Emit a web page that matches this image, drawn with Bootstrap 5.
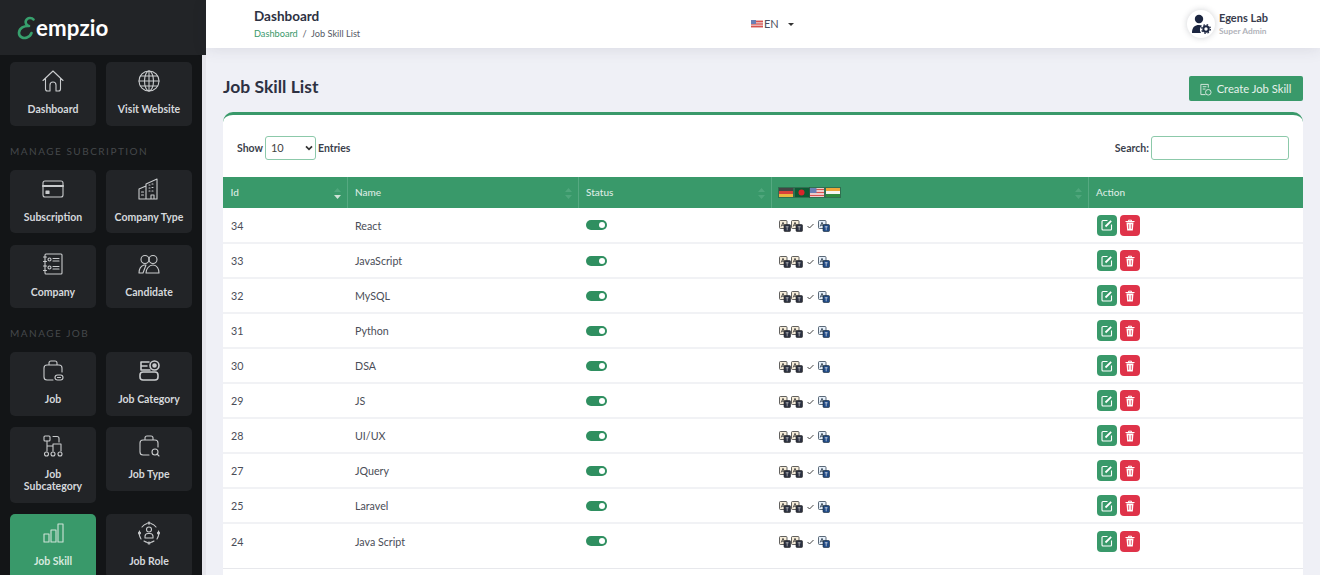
<!DOCTYPE html>
<html lang="en">
<head>
<meta charset="utf-8">
<title>Job Skill List</title>
<link href="https://cdn.jsdelivr.net/npm/bootstrap@5.3.0/dist/css/bootstrap.min.css" rel="stylesheet">
<style>
html,body{height:575px;overflow:hidden}
body{font-family:Lato,"Liberation Sans",sans-serif;background:#eff0f6;color:#2d3142}
.shell{height:575px}
.side{width:206px;height:575px;flex:none;background:#e6e6ec}
.logo-box{height:55px;background:#222427;padding-left:17px;color:#fff;font-size:22.300px;font-weight:700;letter-spacing:.1px}
.logo-e{width:19px;height:24px;flex:none;fill:none;stroke:#37a06d;stroke-width:2.600;stroke-linecap:round;stroke-linejoin:round}
.side-scroll{width:202px;flex:1;min-height:0;background:#131517;padding:7px 10px 0;overflow:hidden}
.tile-grid{display:grid;grid-template-columns:86px 86px;column-gap:10px;row-gap:11.400px;align-items:start}
.tile{background:#222427;border-radius:5px;padding:7px 3px 10.600px;color:#d5d8dc;font-size:10.500px;font-weight:700;line-height:12px;text-align:center;text-decoration:none;display:flex;flex-direction:column;align-items:center}
.tile svg{width:24px;height:24px;margin-bottom:10px;flex:none;fill:none;stroke:#c9cbcd;stroke-width:1.100;stroke-linecap:round;stroke-linejoin:round}
.tile.on{background:#39996a;color:#d8e9df;border-radius:5px 5px 0 0;min-height:70px}
.tile.on svg{stroke:#cfe3d7}
.side-head{font-size:10px;letter-spacing:1.500px;color:#45484b;line-height:12px;margin:19px 0 13px}
.top{height:48px;background:#fff;box-shadow:0 2px 14px rgba(45,49,66,.1);padding:0 17px 0 48px;position:relative}
.top-title{font-size:13.500px;font-weight:700;color:#2d3142;line-height:17px;margin-top:8px}
.crumbs{font-size:9.200px;line-height:12px;margin-top:3px;color:#555a66}
.crumbs a{color:#39996a;text-decoration:none}
.lang{font-size:11px;color:#4c5060;margin-left:347px;gap:1px}
.caret-mini{border-top:3.500px solid #333;border-left:3.500px solid transparent;border-right:3.500px solid transparent;margin-left:8px}
.avatar{width:28px;height:28px;border-radius:50%;background:#fff;box-shadow:0 0 6px rgba(45,49,66,.22)}
.u-name{font-size:11px;font-weight:700;line-height:13px;color:#383c4c}
.u-role{font-size:8.400px;font-weight:700;line-height:11px;color:#b1b3ba;margin-top:2px}
.body-wrap{padding:0 17px;flex:1;min-width:0}
.head-row{height:64px;padding-top:28px}
.page-h{font-size:17.500px;font-weight:700;color:#2d3142;margin:0;line-height:22px}
.btn-make{background:#39996a;color:#e5f1ea;font-size:11.200px;height:25px;width:114px;border-radius:2px;padding:1px 2px 0 0;border:0;gap:5px}
.btn-make svg{width:13px;height:13px;fill:none;stroke:#dcebe2;stroke-width:1}
.sheet{background:#fff;border-top:3px solid #39996a;border-radius:10px 10px 0 0;height:464px}
.ctl-row{padding:21px 14px 0 14px;height:62px;font-size:10.500px;font-weight:700;color:#3b3f4c}
.ctl-txt{padding-top:1px}
.ctl-sel{width:51px;height:24px;font-size:11px;padding:0 0 0 5px;margin:0 2px;border:1px solid #8cc9aa;border-radius:3px;color:#444;background-image:url("data:image/svg+xml,%3csvg xmlns='http://www.w3.org/2000/svg' viewBox='0 0 9 7'%3e%3cpath fill='none' stroke='%23333' stroke-width='2' d='M1 1.500l3.500 3.500 3.500-3.500'/%3e%3c/svg%3e");background-position:right 2px center;background-size:8px 6px;min-height:0}
.ctl-inp{width:138px;height:24px;margin-left:2px;border:1px solid #8cc9aa;border-radius:3px;min-height:0;padding:0}
.tbl{table-layout:fixed;margin:0;color:#4a4d57;width:1080px}
.tbl th{background:#39996a;color:#dcebe3;font-weight:500;height:31px;padding:0 7.500px;border-right:1px solid #55a981;border-bottom:0;position:relative;vertical-align:middle;font-size:10px}
.tbl th:last-child{border-right:0}
.tbl td{height:35px;padding:2px 8px 0;vertical-align:middle;border-bottom:2px solid #f1f2f5;color:#4a4d57;font-size:10.700px}
.tbl tr:last-child td{border-bottom:0}
.tbl td:last-child{padding-left:9px;padding-top:0}
.sort{position:absolute;right:6px;top:11px;display:block;width:7px;height:11px;fill:#4fa67c}
.tg{width:21px;height:10px;border-radius:5px;background:#2f8f60;position:relative;display:block;margin-top:-2px}
.tg::after{content:"";position:absolute;right:2px;top:2px;width:6px;height:6px;border-radius:50%;background:#fff}
.flag-row{display:flex;gap:1.500px;align-items:center}
.flg{width:14px;height:9px;display:block;flex:none;outline:.5px solid rgba(40,60,50,.45)}
.tr-row{display:flex;align-items:center}
.tr-ic{width:12px;height:12px;display:block;flex:none}
.act{width:20px;height:21px;border-radius:4px;display:inline-flex;align-items:center;justify-content:center;margin-right:3px;border:0;padding:0}
.act svg{width:12px;height:12px}
.act-e{background:#39996a}.act-d{background:#df3349}
.foot-line{border-top:1px solid #e7e8ec;margin-top:10px}
</style>
</head>
<body>
<svg width="0" height="0" class="d-none">
<defs>
<symbol id="tr" viewBox="0 0 12 12"><rect x="0.500" y="0.500" width="7.500" height="8" rx="1" fill="#f6ecd8" stroke="#3a3a3a" stroke-width=".8"/><rect x="5" y="4.500" width="6.500" height="7" rx="1" fill="#2b3040" stroke="#222" stroke-width=".6"/><path d="M2.200 6.500 4 2.300 5.800 6.500M2.900 5.200h2.200" fill="none" stroke="#333" stroke-width=".8"/><path d="M6.700 6.800h3M8.200 6.300v4" stroke="#ddd" stroke-width=".6"/></symbol>
<symbol id="tr2" viewBox="0 0 12 12"><rect x="0.500" y="0.500" width="7.500" height="8" rx="1" fill="#e7f0fa" stroke="#345" stroke-width=".8"/><rect x="5" y="4.500" width="6.500" height="7" rx="1" fill="#1f4a86" stroke="#123" stroke-width=".6"/><path d="M2.200 6.500 4 2.300 5.800 6.500M2.900 5.200h2.200" fill="none" stroke="#234" stroke-width=".8"/><path d="M6.700 6.800h3M8.200 6.300v4" stroke="#fff" stroke-width=".6"/></symbol>
<symbol id="ed" viewBox="0 0 12 12"><path d="M6.500 1.500H2a1 1 0 0 0-1 1V10a1 1 0 0 0 1 1h7.500a1 1 0 0 0 1-1V5.500" fill="none" stroke="#fff" stroke-width="1.100"/><path d="M4.500 7.500 10.200 1.800" stroke="#fff" stroke-width="1.800"/></symbol>
<symbol id="dl" viewBox="0 0 12 12"><path d="M1.500 2.500h9M4.500 2.500V1.200h3v1.300" fill="none" stroke="#fff" stroke-width="1"/><path d="M2.500 3.500h7l-.7 8H3.200z" fill="#fff"/><path d="M4.700 5.200v4.600M7.300 5.200v4.600" stroke="#df3349" stroke-width=".8"/></symbol>
</defs>
</svg>
<div class="shell d-flex">
<aside class="side d-flex flex-column">
<div class="logo-box d-flex align-items-center"><svg class="logo-e" viewBox="0 0 19 24"><path d="M16.500 3.500C15 1.500 10.500 1 9 4.500 8 7 9.500 9.500 12 10 7 9.500 2.500 12 2 16.500 1.700 21 6.500 23 10 21.500c2.500-1 4-3 4.500-4.500"/></svg><span>empzio</span></div>
<div class="side-scroll">
<div class="tile-grid">
<a class="tile" href="#"><svg viewBox="0 0 24 24"><path d="M2 11.500 12 2l10 9.500M4.500 9.500V20a2 2 0 0 0 2 2h2.500v-6a3 3 0 0 1 6 0v6h2.500a2 2 0 0 0 2-2V9.500"/></svg>Dashboard</a>
<a class="tile" href="#"><svg viewBox="0 0 24 24"><circle cx="12" cy="12" r="10"/><ellipse cx="12" cy="12" rx="4.500" ry="10"/><path d="M2 12h20M3.300 7h17.400M3.300 17h17.400M12 2v20"/></svg>Visit Website</a>
</div>
<div class="side-head">MANAGE SUBCRIPTION</div>
<div class="tile-grid">
<a class="tile" href="#"><svg viewBox="0 0 24 24"><rect x="2" y="4" width="20" height="16" rx="2"/><path d="M2 9h20" stroke-width="2"/><rect x="5" y="14" width="3" height="2.500" fill="#c9cbcd"/></svg>Subscription</a>
<a class="tile" href="#"><svg viewBox="0 0 24 24"><path d="M2 22V12l7-3v13M9 22V7l11-5v20H2M14 22v-4h3v4M12 8h1M15 7h1M12 11h1M15 10.500h1M12 14h1M15 14h1M4.500 15h2M4.500 18h2"/></svg>Company Type</a>
<a class="tile" href="#"><svg viewBox="0 0 24 24"><rect x="4" y="2" width="17" height="20" rx="1"/><path d="M2.500 5h3M2.500 9.500h3M2.500 14h3M2.500 18.500h3M12 6.500h6M12 9h6M12 14.500h6M12 17h6"/><circle cx="8.500" cy="7.500" r="1.500"/><circle cx="8.500" cy="15.500" r="1.500"/></svg>Company</a>
<a class="tile" href="#"><svg viewBox="0 0 24 24"><circle cx="8" cy="7.500" r="4"/><circle cx="16" cy="7.500" r="4"/><path d="M2 21c0-4 2-7 5-8h2l-3 8zM9 21c0-4 3-8 7-8s6 4 6 8z"/></svg>Candidate</a>
</div>
<div class="side-head">MANAGE JOB</div>
<div class="tile-grid">
<a class="tile" href="#"><svg viewBox="0 0 24 24"><path d="M8 6V4a2 2 0 0 1 2-2h4a2 2 0 0 1 2 2v2M12 21H6a3 3 0 0 1-3-3V9a3 3 0 0 1 3-3h12a3 3 0 0 1 3 3v4"/><rect x="14" y="16" width="8" height="5" rx="2.500"/><path d="M16.500 18.500h3"/></svg>Job</a>
<a class="tile" href="#"><svg viewBox="0 0 24 24" style="stroke-width:1.600"><path d="M12 3H4v8h9M4 7h6"/><circle cx="17.500" cy="6.500" r="4.500"/><circle cx="17.500" cy="6.500" r="1.500" fill="#c9cbcd"/><rect x="3" y="13" width="18" height="8" rx="3"/></svg>Job Category</a>
<a class="tile" href="#"><svg viewBox="0 0 24 24"><rect x="3" y="2" width="6" height="5" rx="1"/><path d="M6 7v10M12 2.500h4a2 2 0 0 1 2 2V8M12 10h8M12 10v7M20 10v7M6 12h6"/><circle cx="5.500" cy="20" r="2"/><circle cx="12" cy="20" r="2"/><circle cx="19" cy="20" r="2"/></svg>Job<br>Subcategory</a>
<a class="tile" href="#"><svg viewBox="0 0 24 24"><path d="M8 6V4a2 2 0 0 1 2-2h4a2 2 0 0 1 2 2v2M12 21H6a3 3 0 0 1-3-3V9a3 3 0 0 1 3-3h12a3 3 0 0 1 3 3v4"/><circle cx="18" cy="18" r="3"/><path d="m20 20 2 2"/></svg>Job Type</a>
<a class="tile on" href="#"><svg viewBox="0 0 24 24"><rect x="3" y="13" width="5" height="8"/><rect x="10" y="9" width="5" height="12"/><rect x="17" y="3" width="5" height="18"/></svg>Job Skill</a>
<a class="tile" href="#"><svg viewBox="0 0 24 24"><circle cx="12" cy="8.500" r="2.500"/><path d="M8 17v-1.500a3 3 0 0 1 3-3h2a3 3 0 0 1 3 3V17zM5 6a10 10 0 0 1 5-3.500M14 2.500A10 10 0 0 1 19 6M21.500 10a10 10 0 0 1-1.500 8M4 18a10 10 0 0 1-1.500-8M7 20a10 10 0 0 0 3.500 1.500M13.500 21.500A10 10 0 0 0 17 20"/><circle cx="12" cy="2" r="1"/><circle cx="21.500" cy="12" r="1"/><circle cx="2.500" cy="12" r="1"/><circle cx="12" cy="22" r="1"/></svg>Job Role</a>
</div>
</div>
</aside>
<main class="flex-grow-1 d-flex flex-column" style="min-width:0">
<header class="top d-flex align-items-start flex-shrink-0">
<div style="width:150px"><div class="top-title">Dashboard</div><div class="crumbs"><a href="#">Dashboard</a>&nbsp; /&nbsp; Job Skill List</div></div>
<div class="lang d-flex align-items-center" style="height:48px">
<svg width="12" height="8" viewBox="0 0 12 8"><rect width="12" height="8" fill="#e8b4b4"/><path d="M0 1.500h12M0 4h12M0 6.500h12" stroke="#d9534f"/><rect width="5" height="4" fill="#6a7fb5"/></svg>
<span>EN</span><span class="caret-mini"></span></div>
<div class="ms-auto d-flex align-items-center" style="height:48px;margin-right:35px;gap:4px">
<div class="avatar d-flex align-items-center justify-content-center"><svg width="20" height="20" viewBox="0 0 20 20"><circle cx="8" cy="5" r="4.200" fill="#1b2540"/><path d="M1 19c0-6 3-8 7-8 1.300 0 2.300.2 3.100.7A5 5 0 0 0 10 19z" fill="#1b2540"/><circle cx="15" cy="15" r="2.700" fill="none" stroke="#1b2540" stroke-width="2"/><circle cx="15" cy="15" r="4.300" fill="none" stroke="#1b2540" stroke-width="1.300" stroke-dasharray="1.600 1.800"/></svg></div>
<div><div class="u-name">Egens Lab</div><div class="u-role">Super Admin</div></div>
</div>
</header>
<div class="body-wrap">
<div class="head-row d-flex justify-content-between align-items-start">
<h1 class="page-h">Job Skill List</h1>
<button class="btn-make btn d-flex align-items-center justify-content-center"><svg viewBox="0 0 14 14"><path d="M10 5V1.500H2v11h5"/><path d="M4 4h4M4 6.500h3"/><circle cx="10" cy="10" r="3"/></svg>Create Job Skill</button>
</div>
<section class="sheet">
<div class="ctl-row d-flex justify-content-between align-items-start">
<div class="d-flex align-items-center"><span class="ctl-txt">Show</span><select class="form-select ctl-sel" aria-label="Entries"><option>10</option></select><span class="ctl-txt">Entries</span></div>
<div class="d-flex align-items-center"><span class="ctl-txt">Search:</span><input class="form-control ctl-inp" type="text" aria-label="Search"></div>
</div>
<table class="table tbl">
<colgroup><col style="width:124px"><col style="width:231px"><col style="width:193px"><col style="width:317px"><col style="width:215px"></colgroup>
<thead><tr>
<th>Id<svg class="sort" viewBox="0 0 7 11"><path d="M3.500 0 7 4H0z"/><path d="M3.500 11 7 7H0z" fill="#cfe3d7"/></svg></th>
<th>Name<svg class="sort" viewBox="0 0 7 11"><path d="M3.500 0 7 4H0zM3.500 11 7 7H0z"/></svg></th>
<th>Status<svg class="sort" viewBox="0 0 7 11"><path d="M3.500 0 7 4H0zM3.500 11 7 7H0z"/></svg></th>
<th><div class="flag-row"><svg class="flg" viewBox="0 0 14 9"><rect width="14" height="3" fill="#444"/><rect y="3" width="14" height="3" fill="#d8413a"/><rect y="6" width="14" height="3" fill="#e8b840"/></svg><svg class="flg" viewBox="0 0 14 9"><rect width="14" height="9" fill="#0c5c34"/><circle cx="6.500" cy="4.500" r="3" fill="#d8252b"/></svg><svg class="flg" viewBox="0 0 14 9"><rect width="14" height="9" fill="#eecaca"/><path d="M0 1.500h14M0 4.500h14M0 7.500h14" stroke="#d9534f"/><rect width="6.500" height="5" fill="#6a7fb5"/></svg><svg class="flg" viewBox="0 0 14 9"><rect width="14" height="3" fill="#eea63a"/><rect y="3" width="14" height="3" fill="#f5f5f0"/><rect y="6" width="14" height="3" fill="#2f8a3d"/></svg></div><svg class="sort" viewBox="0 0 7 11"><path d="M3.500 0 7 4H0zM3.500 11 7 7H0z"/></svg></th>
<th>Action</th>
</tr></thead>
<tbody id="rows"></tbody>
</table>
<div class="foot-line"></div>
</section>
</div>
</main>
</div>
<script>
const data=[[34,"React"],[33,"JavaScript"],[32,"MySQL"],[31,"Python"],[30,"DSA"],[29,"JS"],[28,"UI/UX"],[27,"JQuery"],[25,"Laravel"],[24,"Java Script"]];
document.getElementById('rows').innerHTML=data.map(([i,n])=>`<tr><td>${i}</td><td>${n}</td><td><span class="tg"></span></td><td><div class="tr-row"><svg class="tr-ic"><use href="#tr"/></svg><svg class="tr-ic"><use href="#tr"/></svg><svg width="7" height="6" viewBox="0 0 7 6" class="mx-1"><path d="M.5 3 2.500 5 6.500 1" fill="none" stroke="#444" stroke-width="1"/></svg><svg class="tr-ic"><use href="#tr2"/></svg></div></td><td><button class="act act-e" aria-label="Edit"><svg><use href="#ed"/></svg></button><button class="act act-d" aria-label="Delete"><svg><use href="#dl"/></svg></button></td></tr>`).join('');
</script>
</body>
</html>
